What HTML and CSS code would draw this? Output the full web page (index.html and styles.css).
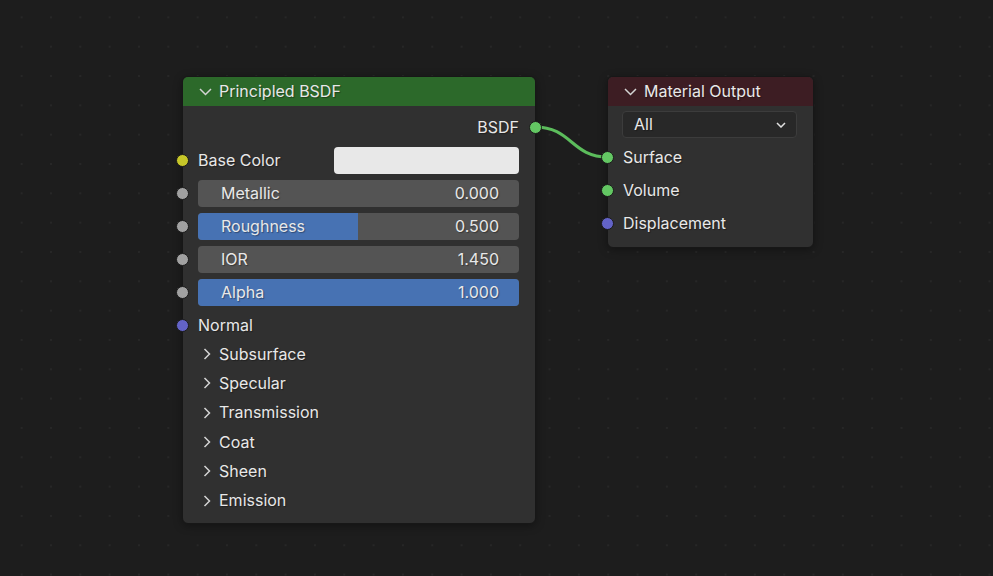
FILE: index.html
```html
<!DOCTYPE html>
<html lang="en">
<head>
<meta charset="utf-8">
<title>Shader Editor</title>
<link rel="stylesheet" href="styles.css">
</head>
<body>
<div class="canvas">
  <svg class="links" width="993" height="576" viewBox="0 0 993 576">
    <path d="M535 127 C 572 127, 571 157, 608 157" fill="none" stroke="#5cbd5c" stroke-width="3" stroke-linecap="round"/>
  </svg>

  <div class="node node-bsdf">
    <div class="node-header header-shader">
      <svg class="hchev" width="13" height="8" viewBox="0 0 13 8"><path d="M1 1 L6.5 6.5 L12 1" fill="none" stroke="#d4d4d4" stroke-width="1.5"/></svg>
      <span>Principled BSDF</span>
    </div>
    <div class="node-body">
      <div class="rows">
        <div class="row row-out">
          <span>BSDF</span>
          <i class="socket socket-out s-shader"></i>
        </div>
        <div class="row">
          <i class="socket socket-in s-color"></i>
          <span class="label">Base Color</span>
          <div class="swatch"></div>
        </div>
        <div class="row">
          <i class="socket socket-in s-float"></i>
          <div class="slider">
            <div class="fill" style="width:0%"></div>
            <span class="s-label">Metallic</span><span class="s-value">0.000</span>
          </div>
        </div>
        <div class="row">
          <i class="socket socket-in s-float"></i>
          <div class="slider">
            <div class="fill" style="width:49.8%"></div>
            <span class="s-label">Roughness</span><span class="s-value">0.500</span>
          </div>
        </div>
        <div class="row">
          <i class="socket socket-in s-float"></i>
          <div class="slider">
            <div class="fill" style="width:0%"></div>
            <span class="s-label">IOR</span><span class="s-value">1.450</span>
          </div>
        </div>
        <div class="row">
          <i class="socket socket-in s-float"></i>
          <div class="slider">
            <div class="fill" style="width:100%"></div>
            <span class="s-label">Alpha</span><span class="s-value">1.000</span>
          </div>
        </div>
        <div class="row">
          <i class="socket socket-in s-vector"></i>
          <span class="label">Normal</span>
        </div>
      </div>
      <div class="panels">
        <div class="panel"><svg class="pchev" width="8" height="12" viewBox="0 0 8 12"><path d="M1.5 1 L6.5 6 L1.5 11" fill="none" stroke="#d4d4d4" stroke-width="1.5"/></svg><span>Subsurface</span></div>
        <div class="panel"><svg class="pchev" width="8" height="12" viewBox="0 0 8 12"><path d="M1.5 1 L6.5 6 L1.5 11" fill="none" stroke="#d4d4d4" stroke-width="1.5"/></svg><span>Specular</span></div>
        <div class="panel"><svg class="pchev" width="8" height="12" viewBox="0 0 8 12"><path d="M1.5 1 L6.5 6 L1.5 11" fill="none" stroke="#d4d4d4" stroke-width="1.5"/></svg><span>Transmission</span></div>
        <div class="panel"><svg class="pchev" width="8" height="12" viewBox="0 0 8 12"><path d="M1.5 1 L6.5 6 L1.5 11" fill="none" stroke="#d4d4d4" stroke-width="1.5"/></svg><span>Coat</span></div>
        <div class="panel"><svg class="pchev" width="8" height="12" viewBox="0 0 8 12"><path d="M1.5 1 L6.5 6 L1.5 11" fill="none" stroke="#d4d4d4" stroke-width="1.5"/></svg><span>Sheen</span></div>
        <div class="panel"><svg class="pchev" width="8" height="12" viewBox="0 0 8 12"><path d="M1.5 1 L6.5 6 L1.5 11" fill="none" stroke="#d4d4d4" stroke-width="1.5"/></svg><span>Emission</span></div>
      </div>
    </div>
  </div>

  <div class="node node-output">
    <div class="node-header header-output">
      <svg class="hchev" width="13" height="8" viewBox="0 0 13 8"><path d="M1 1 L6.5 6.5 L12 1" fill="none" stroke="#d4d4d4" stroke-width="1.5"/></svg>
      <span>Material Output</span>
    </div>
    <div class="node-body body-output">
      <div class="rows">
        <div class="dropdown">
          <span>All</span>
          <svg width="10" height="6" viewBox="0 0 10 6"><path d="M1 1 L5 5 L9 1" fill="none" stroke="#e0e0e0" stroke-width="1.5"/></svg>
        </div>
        <div class="row">
          <i class="socket socket-in s-shader"></i>
          <span class="label">Surface</span>
        </div>
        <div class="row">
          <i class="socket socket-in s-shader"></i>
          <span class="label">Volume</span>
        </div>
        <div class="row">
          <i class="socket socket-in s-vector"></i>
          <span class="label">Displacement</span>
        </div>
      </div>
    </div>
  </div>
</div>
</body>
</html>
```

FILE: styles.css
```css
* { box-sizing: border-box; }

html, body {
  margin: 0;
  padding: 0;
  width: 993px;
  height: 576px;
  overflow: hidden;
  background: #1d1d1d;
  font-family: Inter, "DejaVu Sans", sans-serif;
  font-size: 16px;
  color: #e8e8e8;
}

.canvas {
  position: relative;
  width: 993px;
  height: 576px;
  background-color: #1d1d1d;
  background-image: radial-gradient(circle, #272727 0.9px, rgba(29,29,29,0) 1.4px);
  background-size: 29.33px 29.33px;
  background-position: 7px 2.7px;
}

.links {
  position: absolute;
  left: 0;
  top: 0;
  z-index: 1;
}

.node {
  position: absolute;
  z-index: 2;
  background: #303030;
  border: 1px solid #171717;
  border-radius: 6px;
  box-shadow: 0 2px 8px rgba(0, 0, 0, 0.35);
  text-shadow: 1px 1px 1px rgba(0, 0, 0, 0.35);
}

.node-bsdf {
  left: 182px;
  top: 76px;
  width: 354px;
  height: 448px;
}

.node-output {
  left: 607px;
  top: 76px;
  width: 207px;
  height: 172px;
}

.node-header {
  height: 29px;
  display: flex;
  align-items: center;
  padding-left: 16px;
  padding-bottom: 1px;
  border-radius: 5px 5px 0 0;
}

.header-shader { background: #2c692a; }
.header-output { background: #3d1d23; }

.hchev { margin-right: 7px; margin-top: 2px; }

.node-body {
  padding: 8px 16px 0 15px;
}

.body-output {
  padding: 5px 16px 0 14px;
}

.rows {
  display: flex;
  flex-direction: column;
  gap: 6px;
}

.row {
  position: relative;
  height: 27px;
  display: flex;
  align-items: center;
}

.label, .row-out span { position: relative; top: -1px; }

.row-out { justify-content: flex-end; }

.socket {
  position: absolute;
  top: 50%;
  width: 13px;
  height: 13px;
  margin-top: -6.5px;
  border-radius: 50%;
  border: 1px solid #1a1a1a;
  z-index: 3;
}

.socket-in { left: -22.5px; }
.body-output .socket-in { left: -21.5px; }
.socket-out { right: -22.5px; }

.body-output .row .label { margin-left: 1px; }

.s-shader { background: #63c763; }
.s-color { background: #c7c729; }
.s-float { background: #a1a1a1; }
.s-vector { background: #6363c7; }

.swatch {
  margin-left: auto;
  width: 185px;
  height: 27px;
  background: #e8e8e8;
  border-radius: 4px;
}

.slider {
  position: relative;
  flex: 1;
  height: 27px;
  background: #545454;
  border-radius: 4px;
  overflow: hidden;
  display: flex;
  align-items: center;
  justify-content: space-between;
  padding: 0 20px 1px 23px;
}

.fill {
  position: absolute;
  left: 0;
  top: 0;
  bottom: 0;
  background: #4772b3;
}

.s-label, .s-value { position: relative; }

.panels {
  display: flex;
  flex-direction: column;
}

.panel {
  height: 29.3px;
  display: flex;
  align-items: center;
  padding-left: 5px;
}

.pchev { margin-right: 8px; margin-top: 1px; }

.dropdown {
  height: 27px;
  background: #282828;
  border: 1px solid #3c3c3c;
  border-radius: 4px;
  display: flex;
  align-items: center;
  justify-content: space-between;
  padding: 0 10px 1px 11px;
}

.dropdown svg { margin-top: 1px; }
```
